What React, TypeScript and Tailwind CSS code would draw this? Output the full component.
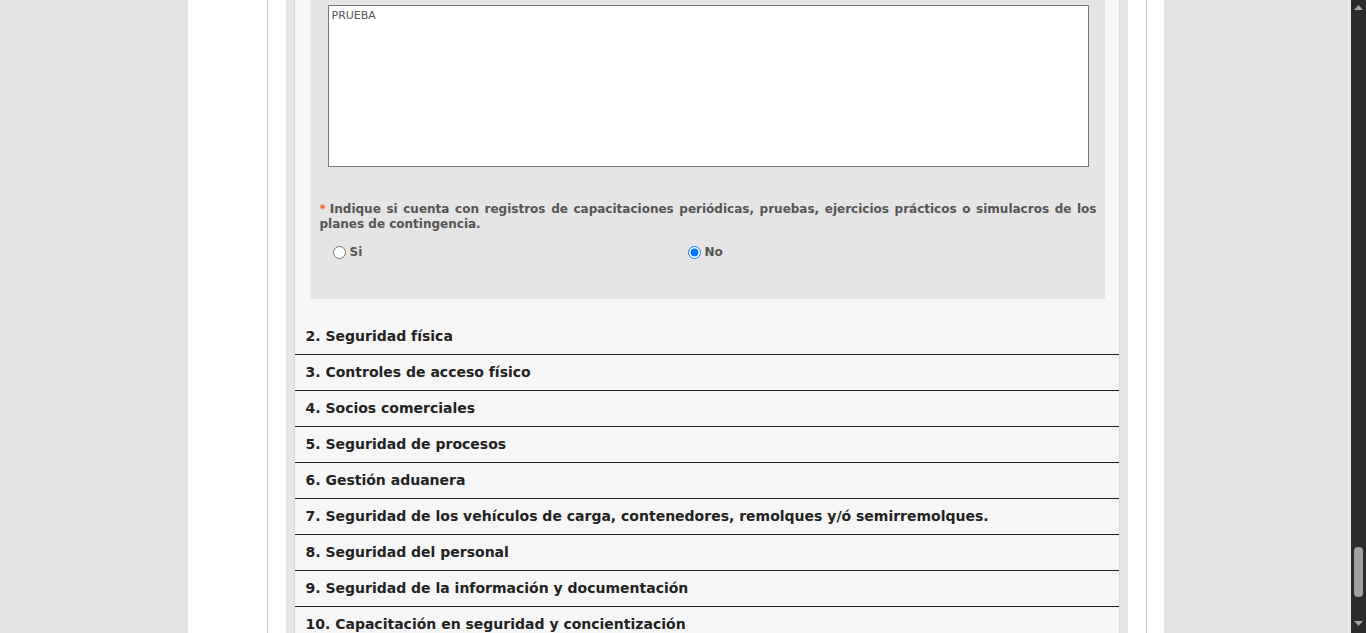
import { useState } from "react";

const sections = [
  "2. Seguridad física",
  "3. Controles de acceso físico",
  "4. Socios comerciales",
  "5. Seguridad de procesos",
  "6. Gestión aduanera",
  "7. Seguridad de los vehículos de carga, contenedores, remolques y/ó semirremolques.",
  "8. Seguridad del personal",
  "9. Seguridad de la información y documentación",
  "10. Capacitación en seguridad y concientización",
];

export default function App() {
  const [answer, setAnswer] = useState("no");

  return (
    <div className="flex h-[633px] overflow-hidden bg-[#e3e4e6] font-['DejaVu_Sans',Verdana,sans-serif]">
      <div className="flex min-w-0 flex-1 justify-center">
        <div className="h-full w-[976px] shrink-0 bg-white pl-[79px] pr-[17px]">
          <div className="h-full border-x border-[#cbc6c9] px-[18px]">
            <div className="h-full bg-[#e6e6e6] px-[8px]">
              <div className="h-full border-x border-[#d8d8d8] bg-[#f6f6f6]">
                <div className="ml-[15px] mr-[14px] bg-[#e5e5e5] pb-[39px] pt-[5px]">
                  <textarea
                    defaultValue="PRUEBA"
                    className="ml-[18px] block h-[162px] w-[761px] resize-none border border-[#767676] bg-white px-[3px] pb-[2px] pt-[3px] text-[11px] leading-[14px] text-[#555] outline-none"
                  />
                  <p className="mt-[35px] pl-[10px] pr-[8px] text-justify text-[12px] font-bold leading-[15px] text-[#555]">
                    <span className="mr-[4px] text-[#ff5a1f]">*</span>Indique si cuenta con registros de capacitaciones periódicas, pruebas, ejercicios prácticos o simulacros de los planes de contingencia.
                  </p>
                  <div className="ml-[18px] mt-[12px] flex text-[12px] font-bold leading-[16px] text-[#555]">
                    <label className="flex w-[355px] items-center">
                      <input
                        type="radio"
                        name="capacitaciones"
                        checked={answer === "si"}
                        onChange={() => setAnswer("si")}
                        className="ml-[5px] mr-[4px] h-[13px] w-[13px]"
                      />
                      Si
                    </label>
                    <label className="flex items-center">
                      <input
                        type="radio"
                        name="capacitaciones"
                        checked={answer === "no"}
                        onChange={() => setAnswer("no")}
                        className="ml-[5px] mr-[4px] h-[13px] w-[13px]"
                      />
                      No
                    </label>
                  </div>
                </div>

                <div className="mt-[20px]">
                  {sections.map((s) => (
                    <div key={s} className="flex h-[36px] items-center border-b border-[#222] pl-[11px] text-[14px] font-bold text-[#222]">
                      {s}
                    </div>
                  ))}
                </div>
              </div>
            </div>
          </div>
        </div>
      </div>

      {/* scrollbar */}
      <div className="flex w-[15px] shrink-0 flex-col bg-[#2b2b2b]">
        <div className="flex h-[15px] items-start justify-center pt-[5px]">
          <svg width="9" height="5" viewBox="0 0 9 5"><path d="M4.5 0L9 5H0z" fill="#a3a3a3" /></svg>
        </div>
        <div className="flex flex-1 flex-col justify-end pb-[21px]">
          <div className="mx-auto h-[50px] w-[9px] rounded-[4px] bg-[#a0a0a0]" />
        </div>
        <div className="flex h-[15px] items-start justify-center pt-[3px]">
          <svg width="9" height="5" viewBox="0 0 9 5"><path d="M0 0H9L4.5 5z" fill="#a3a3a3" /></svg>
        </div>
      </div>
    </div>
  );
}
